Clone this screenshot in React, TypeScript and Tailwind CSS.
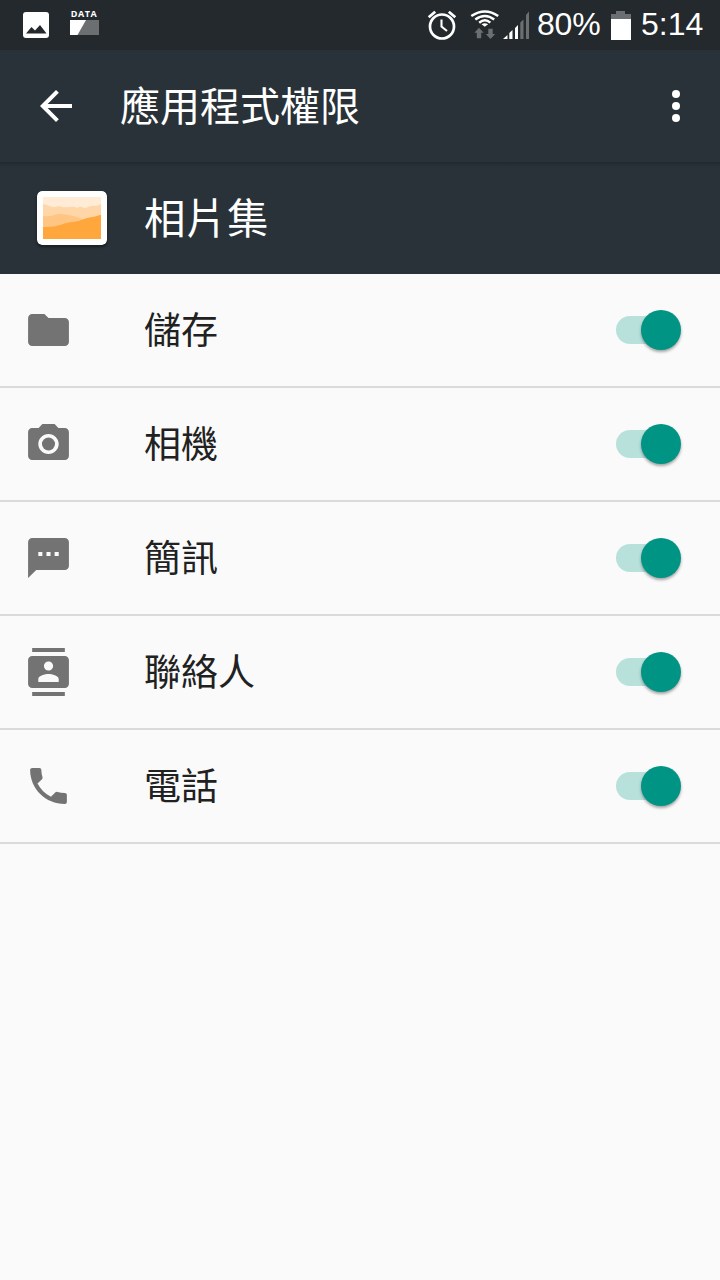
import type { ReactNode } from 'react';

const cjk = "font-['Noto_Sans_CJK_TC',sans-serif]";

function RowIcon({ children }: { children: ReactNode }) {
  return (
    <svg className="h-12 w-[49px] shrink-0" viewBox="0 0 24 24" preserveAspectRatio="none" fill="#737373">
      {children}
    </svg>
  );
}

const permissions: { label: string; icon: ReactNode }[] = [
  {
    label: '儲存',
    icon: <path d="M10 4H4c-1.1 0-1.99.9-1.99 2L2 18c0 1.1.9 2 2 2h16c1.1 0 2-.9 2-2V8c0-1.1-.9-2-2-2h-8l-2-2z" />,
  },
  {
    label: '相機',
    icon: (
      <>
        <circle cx="12" cy="12" r="3.2" />
        <path d="M9 2L7.17 4H4c-1.1 0-2 .9-2 2v12c0 1.1.9 2 2 2h16c1.1 0 2-.9 2-2V6c0-1.1-.9-2-2-2h-3.17L15 2H9zm3 15c-2.76 0-5-2.24-5-5s2.24-5 5-5 5 2.24 5 5-2.24 5-5 5z" />
      </>
    ),
  },
  {
    label: '簡訊',
    icon: <path d="M20 2H4c-1.1 0-1.99.9-1.99 2L2 22l4-4h14c1.1 0 2-.9 2-2V4c0-1.1-.9-2-2-2zM9 11H7V9h2v2zm4 0h-2V9h2v2zm4 0h-2V9h2v2z" />,
  },
  {
    label: '聯絡人',
    icon: (
      <path d="M20 0H4v2h16V0zM4 24h16v-2H4v2zM20 4H4c-1.1 0-2 .9-2 2v12c0 1.1.9 2 2 2h16c1.1 0 2-.9 2-2V6c0-1.1-.9-2-2-2zm-8 2.75c1.24 0 2.25 1.01 2.25 2.25s-1.01 2.25-2.25 2.25S9.75 10.24 9.75 9 10.76 6.75 12 6.75zM17 17H7v-1.5c0-1.67 3.33-2.5 5-2.5s5 .83 5 2.5V17z" />
    ),
  },
  {
    label: '電話',
    icon: (
      <path d="M6.62 10.79c1.44 2.83 3.76 5.14 6.59 6.59l2.2-2.2c.27-.27.67-.36 1.02-.24 1.12.37 2.33.57 3.57.57.55 0 1 .45 1 1V20c0 .55-.45 1-1 1-9.39 0-17-7.61-17-17 0-.55.45-1 1-1h3.5c.55 0 1 .45 1 1 0 1.25.2 2.45.57 3.57.11.35.03.74-.25 1.02l-2.2 2.2z" />
    ),
  },
];

function StatusBar() {
  return (
    <div className="flex h-[50px] items-center bg-[#23292d] pl-[23px] text-white">
      <svg className="h-[26px] w-[26px] shrink-0" viewBox="0 0 26 26">
        <rect width="26" height="26" rx="3" fill="#fff" />
        <path d="M3 21.5L8.500 15l3.500 3.500L17 13l6.500 8.500z" fill="#23292d" />
      </svg>
      <div className="ml-5 flex w-[30px] flex-col items-center pb-[7px]">
        <span className="mb-px text-[9px] leading-[11px] font-bold tracking-[0.5px] font-['Open_Sans',sans-serif]">DATA</span>
        <svg className="h-[15px] w-[29px]" viewBox="0 0 29 15">
          <rect width="29" height="15" fill="#6b6f72" />
          <path d="M0 0h16L7.500 15H0z" fill="#fff" />
        </svg>
      </div>
      <svg className="ml-[328px] h-[30px] w-[30px] shrink-0" viewBox="0 0 30 30" fill="none" stroke="#fff">
        <circle cx="15" cy="16.500" r="12" strokeWidth="2.700" />
        <path d="M14.500 9.500v7l5.500 4.500" strokeWidth="2.100" />
        <path d="M1.700 7.300L8.200 1.800M21.800 1.800l6.500 5.500" strokeWidth="2.800" />
      </svg>
      <svg className="ml-[13px] h-[30px] w-[30px] shrink-0" viewBox="0 0 30 30">
        <g fill="none" stroke="#fff" strokeWidth="2.500">
          <path d="M1.300 6Q15 -3 28.200 6" />
          <path d="M5.300 9.500Q15 2.500 24.200 9.500" />
          <path d="M9.200 12.700Q15 7.800 20.300 12.700" />
        </g>
        <path d="M11.500 14.300q3.300-2 6.600 0l-3.300 2.500z" fill="#fff" />
        <path d="M9 17.800l4.700 5h-2.500v5.500H6.800v-5.500H4.300zM20.500 29l-4.700-5h2.500v-5.200h4.400V24h2.500z" fill="#6b6f72" />
      </svg>
      <svg className="ml-[3px] h-[28px] w-[26px] shrink-0" viewBox="0 0 26 28">
        <path d="M0 28l4.500-4v4zM6.300 22l3.200-3v9H6.300zM12 17l3-3v14h-3z" fill="#fff" />
        <path d="M17.300 11.500l3.200-3V28h-3.200zM23 4l3-3.500V28h-3z" fill="#6b6f72" />
      </svg>
      <span className="ml-2 w-[68px] pb-[2px] text-[32px] leading-[48px] tracking-[-0.2px] whitespace-nowrap font-['Liberation_Sans',sans-serif]">80%</span>
      <svg className="ml-[6px] h-[29px] w-[20px] shrink-0" viewBox="0 0 20 29">
        <path d="M0 3h5V0h9v3h6v6H0z" fill="#6b6f72" />
        <path d="M0 8h20v21H0z" fill="#fff" />
      </svg>
      <span className="ml-[10px] pb-[2px] text-[32px] leading-[48px] whitespace-nowrap font-['Liberation_Sans',sans-serif]">5:14</span>
    </div>
  );
}

function Toggle() {
  return (
    <div className="ml-auto mr-[39px] flex h-10 w-[65px] items-center" role="switch" aria-checked="true">
      <div className="mb-px h-7 w-10 shrink-0 rounded-l-full bg-[#b8e1dc]" />
      <div className="-ml-[15px] size-10 shrink-0 rounded-full bg-[#009485] shadow-[0_2px_3px_rgba(0,0,0,0.35)]" />
    </div>
  );
}

export default function App() {
  return (
    <div className="flex h-[1280px] w-[720px] flex-col overflow-hidden bg-[#fafafa]">
      <StatusBar />
      <header className="flex h-28 items-center bg-[#283238] pl-8 pr-5 text-white">
        <svg className="size-12" viewBox="0 0 24 24" fill="#fff">
          <path d="M20 11H7.83l5.59-5.59L12 4l-8 8 8 8 1.41-1.41L7.83 13H20v-2z" />
        </svg>
        <h1 className={`ml-10 pb-1 text-[40px] leading-[56px] ${cjk}`}>應用程式權限</h1>
        <svg className="ml-auto size-12" viewBox="0 0 24 24" fill="#fff">
          <circle cx="12" cy="6" r="2" />
          <circle cx="12" cy="12" r="2" />
          <circle cx="12" cy="18" r="2" />
        </svg>
      </header>
      <section className="flex h-28 items-center bg-[#283238] bg-linear-to-b from-[#21292e] to-[#283238] to-[5px] pl-[37px] text-white">
        <svg className="h-[54px] w-[70px] rounded-[5px] shadow-[0_2px_3px_rgba(0,0,0,0.4)]" viewBox="0 0 70 54">
          <rect width="70" height="54" rx="5" fill="#fff" />
          <path d="M6 6h58v42H6z" fill="#ffebd6" />
          <path d="M6 13q5 1 8 2.500t8-.500q5 2 10 1t8 1q4-2 6-.500t6-1q4-1 6-.500t6-2V48H6z" fill="#ffd6a8" />
          <path d="M6 25q6 1 11-1t13-.200q8 1.200 12 3.200t10 2l12-3v22H6z" fill="#ffc582" />
          <path d="M6 36q10 .500 19-2.500 4-2 11-2.500 7-1 14-4l8-1.500 6-1.700V48H6z" fill="#ffa63d" />
        </svg>
        <h2 className={`ml-[37px] pb-[5px] text-[41.500px] leading-[56px] ${cjk}`}>相片集</h2>
      </section>
      <ul>
        {permissions.map((p) => (
          <li key={p.label} className="flex h-[114px] items-center border-b-2 border-[#dadada] pl-6">
            <RowIcon>{p.icon}</RowIcon>
            <span className={`ml-[71px] pb-[5px] text-[37px] leading-[52px] text-[#212121] ${cjk}`}>{p.label}</span>
            <Toggle />
          </li>
        ))}
      </ul>
    </div>
  );
}
